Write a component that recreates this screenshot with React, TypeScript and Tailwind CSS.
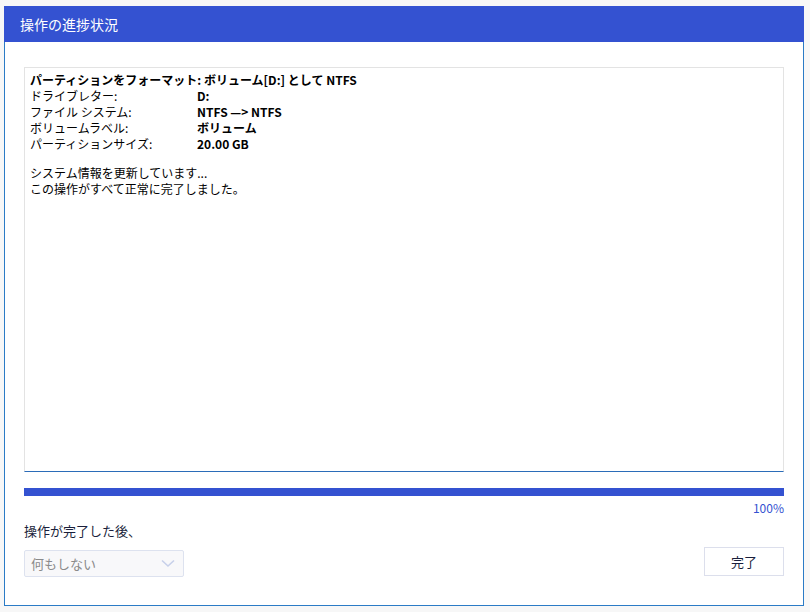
import React from "react";

const font = { fontFamily: '"Noto Sans CJK JP", "Noto Sans", sans-serif' };

export default function App() {
  const rows: [string, string][] = [
    ["ドライブレター:", "D:"],
    ["ファイル システム:", "NTFS —> NTFS"],
    ["ボリュームラベル:", "ボリューム"],
    ["パーティションサイズ:", "20.00 GB"],
  ];
  return (
    <div className="w-[810px] h-[612px] bg-[#f7f7f7] pt-[6px] pl-[4px]" style={font}>
      <div className="w-[800px] h-[600px] bg-white border border-[#2b7bc6] border-t-0 flex flex-col">
        <div className="h-[36px] bg-[#3452d1] -mx-px flex items-center pl-[16px] text-white text-[14px]">
          操作の進捗状況
        </div>
        <div className="flex flex-col px-[19px] pt-[25px]">
          <div className="h-[405px] border border-[#e3e3e3] border-b-[#2b6cb8] pl-[5px] pt-[4px] text-[12px] text-black leading-[16px]">
            <div className="font-bold">パーティションをフォーマット: ボリューム[D:] として NTFS</div>
            {rows.map(([k, v], i) => (
              <div key={i} className="flex">
                <div className="w-[167px]">{k}</div>
                <div className="font-bold">{v}</div>
              </div>
            ))}
            <div className="h-[13px]" />
            <div>システム情報を更新しています...</div>
            <div>この操作がすべて正常に完了しました。</div>
          </div>
          <div className="h-[8px] bg-[#3452d1] mt-[16px]" />
          <div className="text-right text-[12px] text-[#3452d1] leading-[14px] mt-[5px]">100%</div>
          <div className="text-[13px] text-[#1a1f3c] leading-[16px] mt-[8px]">操作が完了した後、</div>
          <div className="flex justify-between items-end mt-[8px]">
            <div className="w-[160px] h-[27px] bg-[#f8f8fa] border border-[#dde2ef] rounded-[2px] flex items-center justify-between pl-[6px] pr-[8px] text-[13px] text-[#8a8a8a]">
              <span>何もしない</span>
              <svg width="14" height="9" viewBox="0 0 14 9">
                <path d="M1 1.5 L7 7 L13 1.5" fill="none" stroke="#c7d0ea" strokeWidth="1.6" />
              </svg>
            </div>
            <div className="w-[80px] h-[29px] mb-[1px] border border-[#dcdfec] flex items-center justify-center text-[13px] text-[#1a1f3c]">
              完了
            </div>
          </div>
        </div>
      </div>
    </div>
  );
}
